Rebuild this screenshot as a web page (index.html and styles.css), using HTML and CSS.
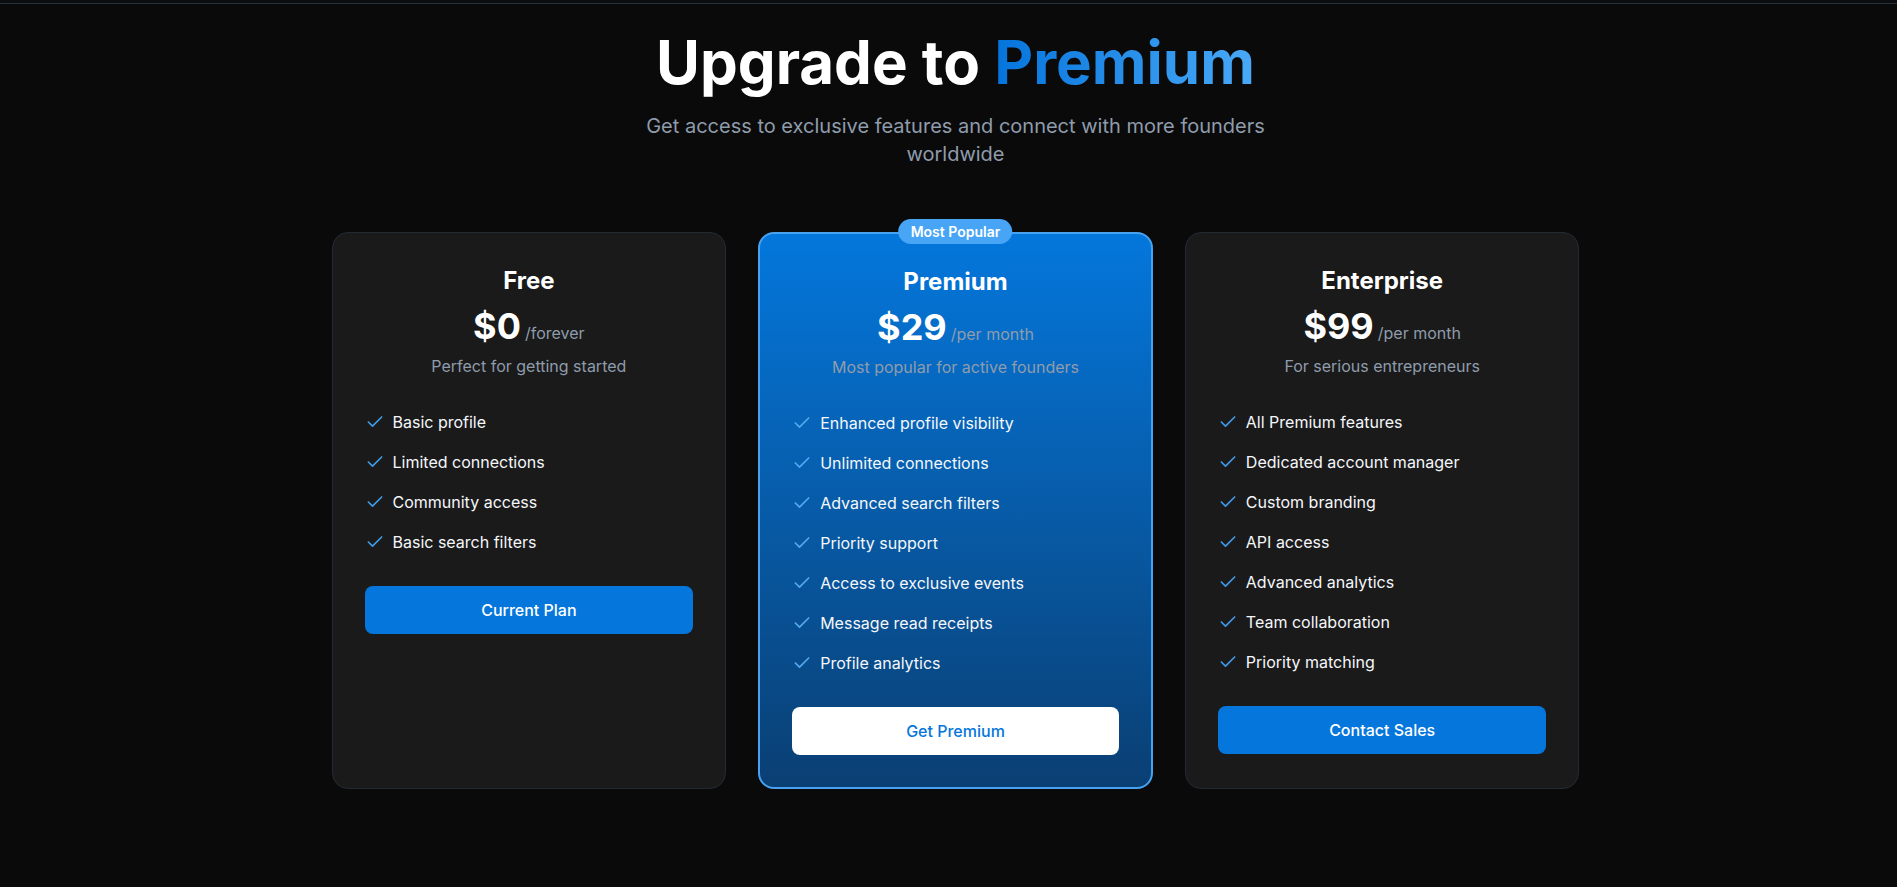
FILE: index.html
```html
<!DOCTYPE html>
<html lang="en">
<head>
<meta charset="utf-8">
<title>Upgrade to Premium</title>
<link rel="stylesheet" href="styles.css">
</head>
<body>
<div class="topbar"></div>
<main class="page">
  <div class="container">
    <header class="hero">
      <h1 class="hero-title">Upgrade to <span class="accent">Premium</span></h1>
      <p class="hero-sub">Get access to exclusive features and connect with more founders worldwide</p>
    </header>

    <section class="plans">
      <article class="plan">
        <h2 class="plan-name">Free</h2>
        <div class="plan-price"><span class="amount">$0</span><span class="period">/forever</span></div>
        <p class="plan-desc">Perfect for getting started</p>
        <ul class="features">
          <li><svg class="check" viewBox="0 0 24 24"><path d="M20 6 9 17l-5-5"/></svg><span>Basic profile</span></li>
          <li><svg class="check" viewBox="0 0 24 24"><path d="M20 6 9 17l-5-5"/></svg><span>Limited connections</span></li>
          <li><svg class="check" viewBox="0 0 24 24"><path d="M20 6 9 17l-5-5"/></svg><span>Community access</span></li>
          <li><svg class="check" viewBox="0 0 24 24"><path d="M20 6 9 17l-5-5"/></svg><span>Basic search filters</span></li>
        </ul>
        <button class="btn btn-blue">Current Plan</button>
      </article>

      <article class="plan plan-featured">
        <div class="badge">Most Popular</div>
        <h2 class="plan-name">Premium</h2>
        <div class="plan-price"><span class="amount">$29</span><span class="period">/per month</span></div>
        <p class="plan-desc">Most popular for active founders</p>
        <ul class="features">
          <li><svg class="check" viewBox="0 0 24 24"><path d="M20 6 9 17l-5-5"/></svg><span>Enhanced profile visibility</span></li>
          <li><svg class="check" viewBox="0 0 24 24"><path d="M20 6 9 17l-5-5"/></svg><span>Unlimited connections</span></li>
          <li><svg class="check" viewBox="0 0 24 24"><path d="M20 6 9 17l-5-5"/></svg><span>Advanced search filters</span></li>
          <li><svg class="check" viewBox="0 0 24 24"><path d="M20 6 9 17l-5-5"/></svg><span>Priority support</span></li>
          <li><svg class="check" viewBox="0 0 24 24"><path d="M20 6 9 17l-5-5"/></svg><span>Access to exclusive events</span></li>
          <li><svg class="check" viewBox="0 0 24 24"><path d="M20 6 9 17l-5-5"/></svg><span>Message read receipts</span></li>
          <li><svg class="check" viewBox="0 0 24 24"><path d="M20 6 9 17l-5-5"/></svg><span>Profile analytics</span></li>
        </ul>
        <button class="btn btn-white">Get Premium</button>
      </article>

      <article class="plan">
        <h2 class="plan-name">Enterprise</h2>
        <div class="plan-price"><span class="amount">$99</span><span class="period">/per month</span></div>
        <p class="plan-desc">For serious entrepreneurs</p>
        <ul class="features">
          <li><svg class="check" viewBox="0 0 24 24"><path d="M20 6 9 17l-5-5"/></svg><span>All Premium features</span></li>
          <li><svg class="check" viewBox="0 0 24 24"><path d="M20 6 9 17l-5-5"/></svg><span>Dedicated account manager</span></li>
          <li><svg class="check" viewBox="0 0 24 24"><path d="M20 6 9 17l-5-5"/></svg><span>Custom branding</span></li>
          <li><svg class="check" viewBox="0 0 24 24"><path d="M20 6 9 17l-5-5"/></svg><span>API access</span></li>
          <li><svg class="check" viewBox="0 0 24 24"><path d="M20 6 9 17l-5-5"/></svg><span>Advanced analytics</span></li>
          <li><svg class="check" viewBox="0 0 24 24"><path d="M20 6 9 17l-5-5"/></svg><span>Team collaboration</span></li>
          <li><svg class="check" viewBox="0 0 24 24"><path d="M20 6 9 17l-5-5"/></svg><span>Priority matching</span></li>
        </ul>
        <button class="btn btn-blue">Contact Sales</button>
      </article>
    </section>
  </div>
</main>
</body>
</html>
```

FILE: styles.css
```css
* { box-sizing: border-box; }

html, body {
  margin: 0;
  padding: 0;
  background: #0a0a0a;
  color: #ffffff;
  font-family: Inter, "Noto Sans", "Liberation Sans", sans-serif;
  height: 100%;
  overflow: hidden;
}

.topbar {
  height: 4px;
  border-bottom: 1px solid #262f3c;
  background: #0c0d10;
}

.page {
  padding-left: 14px;
}

.container {
  max-width: 1280px;
  margin: 0 auto;
  padding: 0 16px;
}

.hero {
  text-align: center;
  padding-top: 28px;
}

.hero-title {
  margin: 0;
  font-size: 60px;
  line-height: 60px;
  font-weight: 700;
  letter-spacing: 0;
}

.accent {
  background: linear-gradient(90deg, #0474dc 0%, #4aa9f7 100%);
  -webkit-background-clip: text;
  background-clip: text;
  color: transparent;
}

.hero-sub {
  margin: 20px auto 0;
  max-width: 672px;
  font-size: 20px;
  line-height: 28px;
  color: #8f9cac;
}

.plans {
  margin-top: 64px;
  display: grid;
  grid-template-columns: repeat(3, 1fr);
  gap: 32px;
  align-items: stretch;
}

.plan {
  position: relative;
  background: #1a1a1a;
  border: 1px solid #232a34;
  border-radius: 16px;
  padding: 32px;
  text-align: center;
}

.plan-featured {
  border: 2px solid #48a2ef;
  background: linear-gradient(180deg, #0477dc 0%, #0a3f73 100%);
}

.badge {
  position: absolute;
  top: -15px;
  left: 50%;
  transform: translateX(-50%);
  background: #48a5f5;
  color: #ffffff;
  font-size: 14px;
  font-weight: 600;
  line-height: 19px;
  padding: 3px 12px;
  border-radius: 999px;
  white-space: nowrap;
}

.plan-name {
  margin: 0 0 9px;
  font-size: 24px;
  line-height: 32px;
  font-weight: 700;
}

.plan-price {
  line-height: 40px;
  margin-bottom: 1px;
}

.amount {
  font-size: 36px;
  font-weight: 700;
}

.period {
  font-size: 16px;
  color: #8f9cac;
  margin-left: 4px;
}

.plan-desc {
  margin: 0 0 32px;
  font-size: 16px;
  line-height: 24px;
  color: #8f9cac;
}

.features {
  list-style: none;
  margin: 0 0 32px;
  padding: 0;
  display: flex;
  flex-direction: column;
  gap: 16px;
  text-align: left;
}

.features li {
  display: flex;
  align-items: center;
  gap: 8px;
  font-size: 16px;
  line-height: 24px;
  color: #f5f7fa;
}

.check {
  width: 20px;
  height: 20px;
  flex: none;
  fill: none;
  stroke: #3f9ae6;
  stroke-width: 2;
  stroke-linecap: round;
  stroke-linejoin: round;
}

.plan-featured .check {
  stroke: #55a8ef;
}

.btn {
  display: block;
  width: 100%;
  height: 48px;
  border: none;
  border-radius: 8px;
  font-family: inherit;
  font-size: 16px;
  font-weight: 500;
  cursor: pointer;
}

.btn-blue {
  background: #0476dc;
  color: #ffffff;
}

.btn-white {
  background: #ffffff;
  color: #0476dc;
}
```
